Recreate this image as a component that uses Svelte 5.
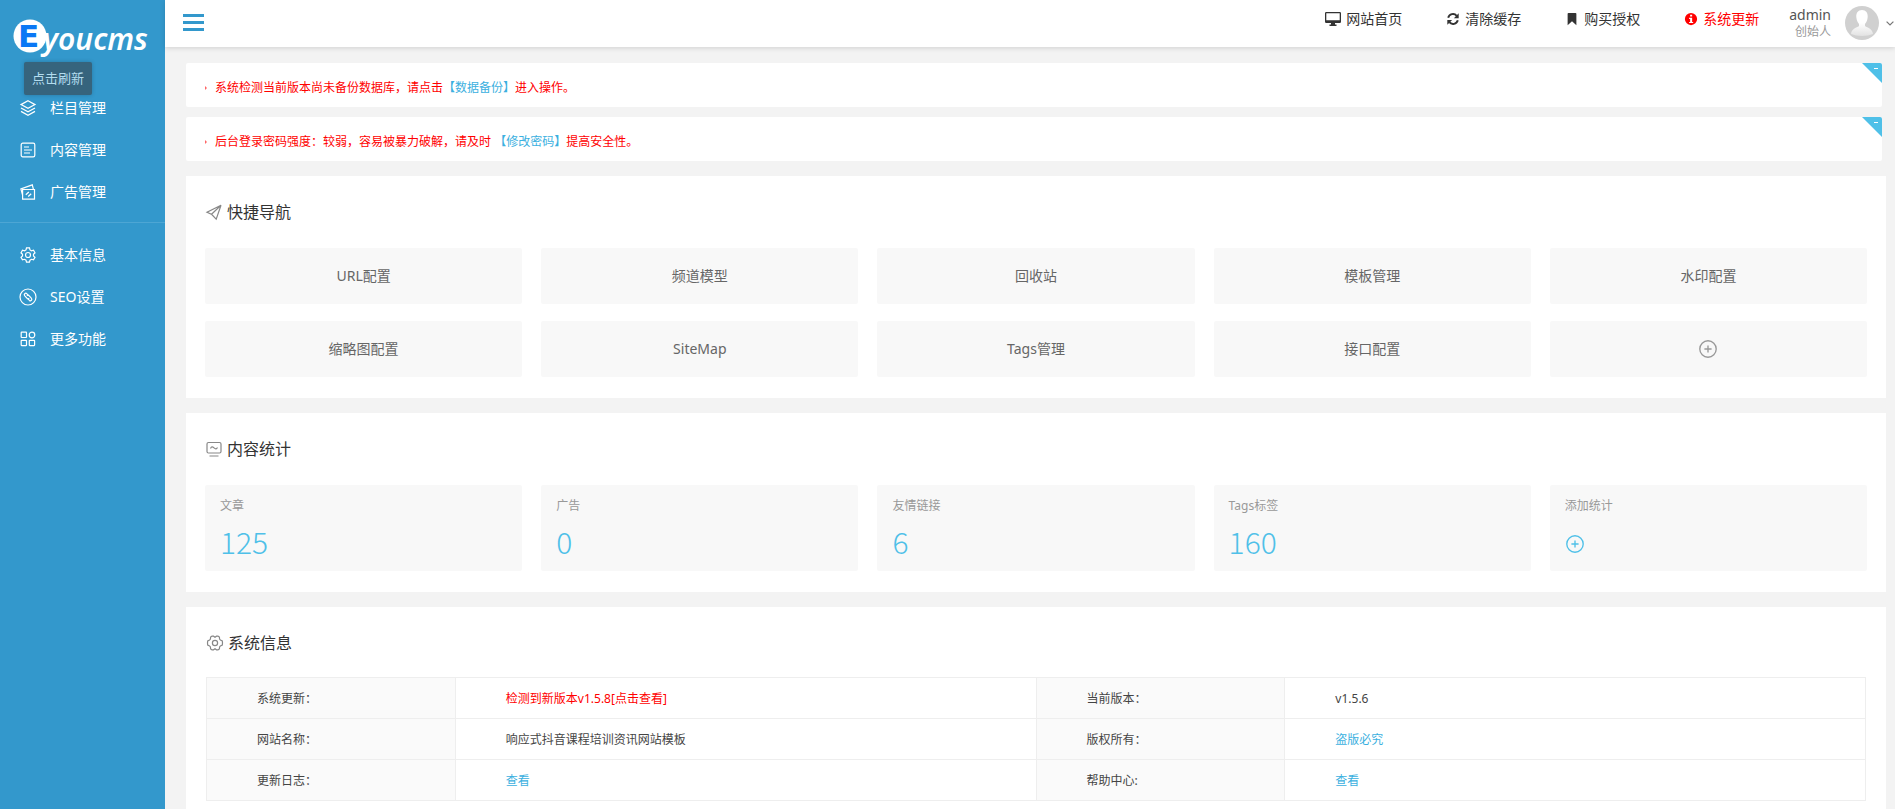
<script>
  const menu = [
    { icon: 'layers', label: '栏目管理' },
    { icon: 'doc', label: '内容管理' },
    { icon: 'ad', label: '广告管理' },
  ];

  const settings = [
    { icon: 'gear', label: '基本信息' },
    { icon: 'seo', label: 'SEO设置' },
    { icon: 'grid', label: '更多功能' },
  ];

  const topLinks = [
    { icon: 'desktop', label: '网站首页' },
    { icon: 'refresh', label: '清除缓存' },
    { icon: 'bookmark', label: '购买授权' },
    { icon: 'info', label: '系统更新', alert: true },
  ];

  const shortcuts = [
    'URL配置', '频道模型', '回收站', '模板管理', '水印配置',
    '缩略图配置', 'SiteMap', 'Tags管理', '接口配置',
  ];

  const stats = [
    { label: '文章', value: 125 },
    { label: '广告', value: 0 },
    { label: '友情链接', value: 6 },
    { label: 'Tags标签', value: 160 },
  ];

  let notices = $state([
    { id: 1, before: '系统检测当前版本尚未备份数据库，请点击', link: '【数据备份】', after: '进入操作。', open: true },
    { id: 2, before: '后台登录密码强度：较弱，容易被暴力破解，请及时 ', link: '【修改密码】', after: '提高安全性。', open: true },
  ]);

  const info = [
    [
      { name: '系统更新：', text: '检测到新版本v1.5.8[点击查看]', kind: 'alert' },
      { name: '当前版本：', text: 'v1.5.6' },
    ],
    [
      { name: '网站名称：', text: '响应式抖音课程培训资讯网站模板' },
      { name: '版权所有：', text: '盗版必究', kind: 'link' },
    ],
    [
      { name: '更新日志：', text: '查看', kind: 'link' },
      { name: '帮助中心:', text: '查看', kind: 'link' },
    ],
  ];

  let collapsed = $state(false);
</script>

{#snippet icon(name)}
  <svg class="icon" viewBox="0 0 16 16" aria-hidden="true">
    {#if name === 'layers'}
      <path d="M8 .8 15 4.6 8 8.4 1 4.6Z" />
      <path d="m1 8 7 3.8L15 8M1 11.4l7 3.8 7-3.8" />
    {:else if name === 'doc'}
      <rect x="1.2" y="1.2" width="13.6" height="13.6" rx="1.6" />
      <path d="M4 5h5M4 8h8M4 11h6" />
    {:else if name === 'ad'}
      <path d="M2.6 5.5h11.9v9.7H2.6ZM2.6 11 .9 5 12.3.9l1.1 4.5" />
      <path d="m5.8 10.8 3-2.8M8.2 12.5l3-2.8" />
    {:else if name === 'gear'}
      <path d="M6.5.9h3l.5 2 1.5.9 2-.6 1.5 2.6-1.5 1.4v1.7l1.5 1.4-1.5 2.6-2-.6-1.5.9-.5 2h-3l-.5-2-1.5-.9-2 .6L1 10.3l1.5-1.4V7.2L1 5.8l1.5-2.6 2 .6L6 2.9Z" />
      <circle cx="8" cy="8" r="2.5" />
    {:else if name === 'seo'}
      <circle cx="8" cy="8" r="8" />
      <path d="M8.6 6.7 6.7 4.6a1.5 1.5 0 0 0-2.1 2.1l2.5 2.7a1.5 1.5 0 0 0 2.1-.1" />
      <path d="m7.5 9.3 1.9 2.1a1.5 1.5 0 0 0 2.1-2.1L9 6.6a1.5 1.5 0 0 0-2.1.1" />
    {:else if name === 'grid'}
      <rect x="1.2" y="1.2" width="5.3" height="5.3" rx=".5" />
      <circle cx="12" cy="4" r="2.8" />
      <rect x="1.2" y="9.3" width="5.3" height="5.3" rx=".5" />
      <rect x="9.3" y="9.3" width="5.3" height="5.3" rx=".5" />
    {:else if name === 'desktop'}
      <path class="solid" fill-rule="evenodd" d="M1.2 1h13.6q1.2 0 1.2 1.2v8.6q0 1.2-1.2 1.2H10v1.4h1.5V15h-7v-1.6H6V12H1.2Q0 12 0 10.8V2.2Q0 1 1.2 1ZM1.3 2.2v7h13.4v-7Z" />
    {:else if name === 'refresh'}
      <path class="bold" d="M2.5 6.5a5.6 5.6 0 0 1 9.7-2.2M13.5 9.5a5.6 5.6 0 0 1-9.7 2.2" />
      <path class="solid" d="M14.5 1.5V7H9ZM1.5 14.5V9H7Z" />
    {:else if name === 'bookmark'}
      <path class="solid" d="M3 2q0-1 1-1h8q1 0 1 1v13l-5-4.5L3 15Z" />
    {:else if name === 'info'}
      <path class="solid" fill-rule="evenodd" d="M8 1a7 7 0 1 1 0 14A7 7 0 0 1 8 1ZM7 3v2.2h2.3V3ZM5.8 6.5v1.4H7v3.4H5.8v1.4h4.7v-1.4H9.3V6.5Z" />
    {:else if name === 'plane'}
      <path d="M15 1.2 1 8.3l4.5 1.9ZM15 1.2 5.5 10.2l4.7 4.9Z" />
    {:else if name === 'monitor'}
      <rect x="1" y="1.5" width="14" height="10.5" rx="1.5" />
      <path d="M4.5 7.5c1-2 2-2 3.5-.6s2.5 1.2 3.5-.4M3.5 15h9" />
    {:else if name === 'cog'}
      <path d="M5 1.2h1.5L8 2.2l1.5-1H11l1.4.9.2 2 .8 1 1.9.8.2 2.1-.2 2.1-1.9.8-.8 1-.2 2-1.4.9H9.5L8 13.8l-1.5 1H5l-1.4-.9-.2-2-.8-1-1.9-.8L.5 8l.2-2.1 1.9-.8.8-1 .2-2Z" />
      <circle cx="8" cy="8" r="2.6" />
    {:else if name === 'plus'}
      <circle cx="8" cy="8" r="7.3" />
      <path d="M8 4.8v6.4M4.8 8h6.4" />
    {/if}
  </svg>
{/snippet}

<div class="layout">
  {#if !collapsed}
    <aside class="sidebar">
      <a class="logo" href="#home" aria-label="Eyoucms">
        <svg viewBox="0 0 140 40" aria-hidden="true">
          <circle cx="20" cy="19" r="16.5" fill="#fff" />
          <text class="logo-e" x="8" y="30">E</text>
          <text class="logo-text" x="33" y="33">youcms</text>
        </svg>
        <span class="tip">点击刷新</span>
      </a>
      <nav>
        <ul class="menu">
          {#each menu as m (m.label)}
            <li><a href="#{m.icon}">{@render icon(m.icon)}{m.label}</a></li>
          {/each}
        </ul>
        <ul class="menu second">
          {#each settings as m (m.label)}
            <li><a href="#{m.icon}">{@render icon(m.icon)}{m.label}</a></li>
          {/each}
        </ul>
      </nav>
    </aside>
  {/if}

  <div class="page">
    <header class="topbar">
      <button class="burger" aria-label="菜单" onclick={() => (collapsed = !collapsed)}>
        <span></span><span></span><span></span>
      </button>
      <nav class="top-links">
        {#each topLinks as l (l.label)}
          <a href="#{l.icon}" class:alert={l.alert}>{@render icon(l.icon)}{l.label}</a>
        {/each}
      </nav>
      <button class="user">
        <span class="who">
          <span class="name">admin</span>
          <span class="role">创始人</span>
        </span>
        <svg class="avatar" viewBox="0 0 34 34" aria-hidden="true">
          <defs>
            <linearGradient id="bust" x1="0" y1="0" x2="0" y2="1">
              <stop offset="0.5" stop-color="#fff" />
              <stop offset="1" stop-color="#e2e2e2" />
            </linearGradient>
          </defs>
          <circle cx="17" cy="17" r="17" fill="#d0d0d0" />
          <path fill="url(#bust)" d="M17 4c4 0 6 3 5.7 7-.2 3-1.2 5-2.7 7v2c1 1.5 7.5 2 8 8q-4.5 2-11 2T6 28c.5-6 7-6.5 8-8v-2c-1.5-2-2.5-4-2.7-7C11 7 13 4 17 4Z" />
        </svg>
        <svg class="caret" viewBox="0 0 8 5" aria-hidden="true"><path d="m.6.6 3.4 3.4L7.4.6" /></svg>
      </button>
    </header>

    <main>
      <div class="notices">
        {#each notices as n (n.id)}
          <div class="notice" class:closed={!n.open}>
            <p>{n.before}<a href="#notice-{n.id}">{n.link}</a>{n.after}</p>
            <button class="fold" aria-label="收起" onclick={() => (n.open = !n.open)}></button>
          </div>
        {/each}
      </div>

      <section class="panel">
        <h2>{@render icon('plane')}快捷导航</h2>
        <div class="tiles">
          {#each shortcuts as s (s)}
            <a class="tile" href="#{s}">{s}</a>
          {/each}
          <button class="tile add" aria-label="添加">{@render icon('plus')}</button>
        </div>
      </section>

      <section class="panel">
        <h2>{@render icon('monitor')}内容统计</h2>
        <div class="tiles">
          {#each stats as s (s.label)}
            <a class="stat" href="#{s.label}">
              <span class="stat-label">{s.label}</span>
              <span class="stat-value">{s.value}</span>
            </a>
          {/each}
          <button class="stat">
            <span class="stat-label">添加统计</span>
            <span class="stat-value add">{@render icon('plus')}</span>
          </button>
        </div>
      </section>

      <section class="panel last">
        <h2>{@render icon('cog')}系统信息</h2>
        <table>
          <tbody>
            {#each info as row}
              <tr>
                {#each row as cell}
                  <th scope="row">{cell.name}</th>
                  <td>
                    {#if cell.kind}
                      <a href="#info" class:alert={cell.kind === 'alert'}>{cell.text}</a>
                    {:else}
                      {cell.text}
                    {/if}
                  </td>
                {/each}
              </tr>
            {/each}
          </tbody>
        </table>
      </section>
    </main>
  </div>
</div>

<style>
  :global(body) {
    background: #f3f3f3;
    font-family: 'Noto Sans', 'Noto Sans CJK SC', sans-serif;
    font-size: 12px;
    line-height: 20px;
    color: #444;
  }

  .layout {
    display: flex;
    height: 100vh;
    overflow: hidden;
  }

  a {
    color: #3bb0e0;
    text-decoration: none;
  }

  button {
    border: 0;
    padding: 0;
    background: none;
    font: inherit;
    color: inherit;
    cursor: pointer;
  }

  .icon {
    width: 16px;
    height: 16px;
    flex: none;
    overflow: visible;
    fill: none;
    stroke: currentColor;
    stroke-width: 1.2;
  }
  .icon .solid {
    fill: currentColor;
    stroke: none;
  }
  .icon .bold {
    stroke-width: 2.2;
  }

  /* sidebar */
  .sidebar {
    flex: none;
    width: 165px;
    background: #3398cc;
  }

  .logo {
    position: relative;
    display: block;
    height: 70px;
    padding: 17px 0 0 10px;
    box-sizing: border-box;
  }
  .logo svg {
    display: block;
    width: 140px;
    height: 40px;
    overflow: visible;
  }
  .logo-e {
    font: bold 31px 'DejaVu Sans', sans-serif;
    fill: #0a78f5;
  }
  .logo-text {
    font: italic 600 30px 'Noto Sans', sans-serif;
    fill: #fff;
  }
  .tip {
    position: absolute;
    left: 24px;
    top: 62px;
    padding: 6px 8px;
    border-radius: 2px;
    background: #36647d;
    box-shadow: 0 0 4px rgba(0, 0, 0, 0.2);
    font-size: 13px;
    line-height: 21px;
    color: #b3dcee;
    white-space: nowrap;
  }

  .menu {
    list-style: none;
    margin: 0;
    padding: 17px 0 9px;
  }
  .menu.second {
    border-top: 1px solid #4da6d4;
    padding-top: 11px;
  }
  .menu a {
    display: flex;
    align-items: center;
    gap: 14px;
    height: 42px;
    padding-left: 20px;
    font-size: 14px;
    color: #fff;
  }

  /* top bar */
  .page {
    flex: 1;
    min-width: 0;
    display: flex;
    flex-direction: column;
  }

  .topbar {
    flex: none;
    display: flex;
    height: 47px;
    padding-left: 18px;
    background: #fff;
    box-shadow: 0 1px 5px rgba(0, 0, 0, 0.15);
  }
  .burger {
    display: flex;
    flex-direction: column;
    gap: 4px;
    width: 21px;
    margin-right: auto;
    padding-top: 14px;
  }
  .burger span {
    height: 3px;
    width: 21px;
    background: #3398cc;
  }
  .top-links {
    display: flex;
    gap: 44px;
    padding-top: 9px;
  }
  .top-links a {
    display: flex;
    align-items: center;
    gap: 5px;
    height: 20px;
    font-size: 14px;
    color: #333;
  }
  .top-links .icon {
    width: 14px;
    height: 14px;
  }
  .top-links a:first-child .icon {
    width: 16px;
    height: 16px;
  }
  .top-links a.alert,
  td .alert {
    color: #f00;
  }
  .user {
    display: flex;
    align-items: center;
    margin: 0 1px 0 30px;
    height: 46px;
  }
  .who {
    display: flex;
    flex-direction: column;
    text-align: right;
    margin-right: 14px;
  }
  .name {
    font-size: 14px;
    line-height: 18px;
    color: #555;
  }
  .role {
    line-height: 16px;
    color: #999;
  }
  .avatar {
    width: 34px;
    height: 34px;
    margin-right: 7px;
  }
  .caret {
    width: 8px;
    height: 5px;
    fill: none;
    stroke: #777;
    stroke-width: 1.2;
  }

  /* content */
  main {
    flex: 1;
    min-height: 0;
    display: flex;
    flex-direction: column;
    gap: 15px;
    padding: 16px 9px 0 21px;
    overflow: hidden;
  }

  .notices {
    display: flex;
    flex-direction: column;
    gap: 10px;
    margin-right: 4px;
  }
  .notice {
    position: relative;
    background: #fff;
    border-radius: 2px;
    overflow: hidden;
    padding: 15px 19px 9px;
    color: #f00;
  }
  .notice.closed {
    height: 0;
  }
  .notice p {
    display: flex;
    align-items: center;
    margin: 0;
    white-space: pre;
  }
  .notice p::before {
    content: '';
    border: 2px solid transparent;
    border-left-color: #f66;
    border-right: 0;
    margin-right: 8px;
  }
  .fold {
    position: absolute;
    top: 0;
    right: 0;
    width: 20px;
    height: 20px;
    background: #4fc0e8;
    clip-path: polygon(0 0, 100% 0, 100% 100%);
  }
  .fold::after {
    content: '';
    position: absolute;
    top: 5px;
    right: 4px;
    width: 4px;
    height: 1px;
    background: #fff;
  }

  .panel {
    flex: none;
    background: #fff;
    padding: 24px 19px 21px;
  }
  .panel.last {
    flex: 1 0 auto;
    padding: 24px 20px 8px;
  }

  h2 {
    display: flex;
    align-items: center;
    gap: 5px;
    margin: 0 0 24px 1px;
    font-size: 16px;
    font-weight: 400;
    line-height: 24px;
    color: #333;
  }
  .last h2 {
    margin: 0 0 22px 1px;
  }
  h2 .icon {
    color: #888;
  }

  .tiles {
    display: grid;
    grid-template-columns: repeat(5, 1fr);
    gap: 17px 19px;
  }
  .tile {
    display: flex;
    align-items: center;
    justify-content: center;
    height: 56px;
    border-radius: 2px;
    background: #f8f8f8;
    font-size: 14px;
    color: #666;
  }
  .add .icon {
    width: 18px;
    height: 18px;
  }
  .tile.add {
    color: #999;
  }

  .stat {
    display: flex;
    flex-direction: column;
    gap: 4px;
    height: 86px;
    padding: 11px 14px 0 15px;
    box-sizing: border-box;
    border-radius: 2px;
    background: #f8f8f8;
    text-align: left;
  }
  .stat-label {
    color: #999;
  }
  .stat-value {
    display: flex;
    align-items: center;
    height: 42px;
    font-family: 'Noto Sans CJK SC', sans-serif;
    font-size: 30px;
    font-weight: 300;
    color: #4fc0e8;
  }
  .stat-value.add {
    height: 48px;
    padding-left: 1px;
  }

  table {
    width: 100%;
    border-collapse: collapse;
    table-layout: fixed;
  }
  th,
  td {
    height: 41px;
    padding: 2px 0 0 50px;
    border: 1px solid #eee;
    box-sizing: border-box;
    text-align: left;
    font-weight: 400;
  }
  th {
    width: 15%;
    background: #fafafa;
  }
</style>
